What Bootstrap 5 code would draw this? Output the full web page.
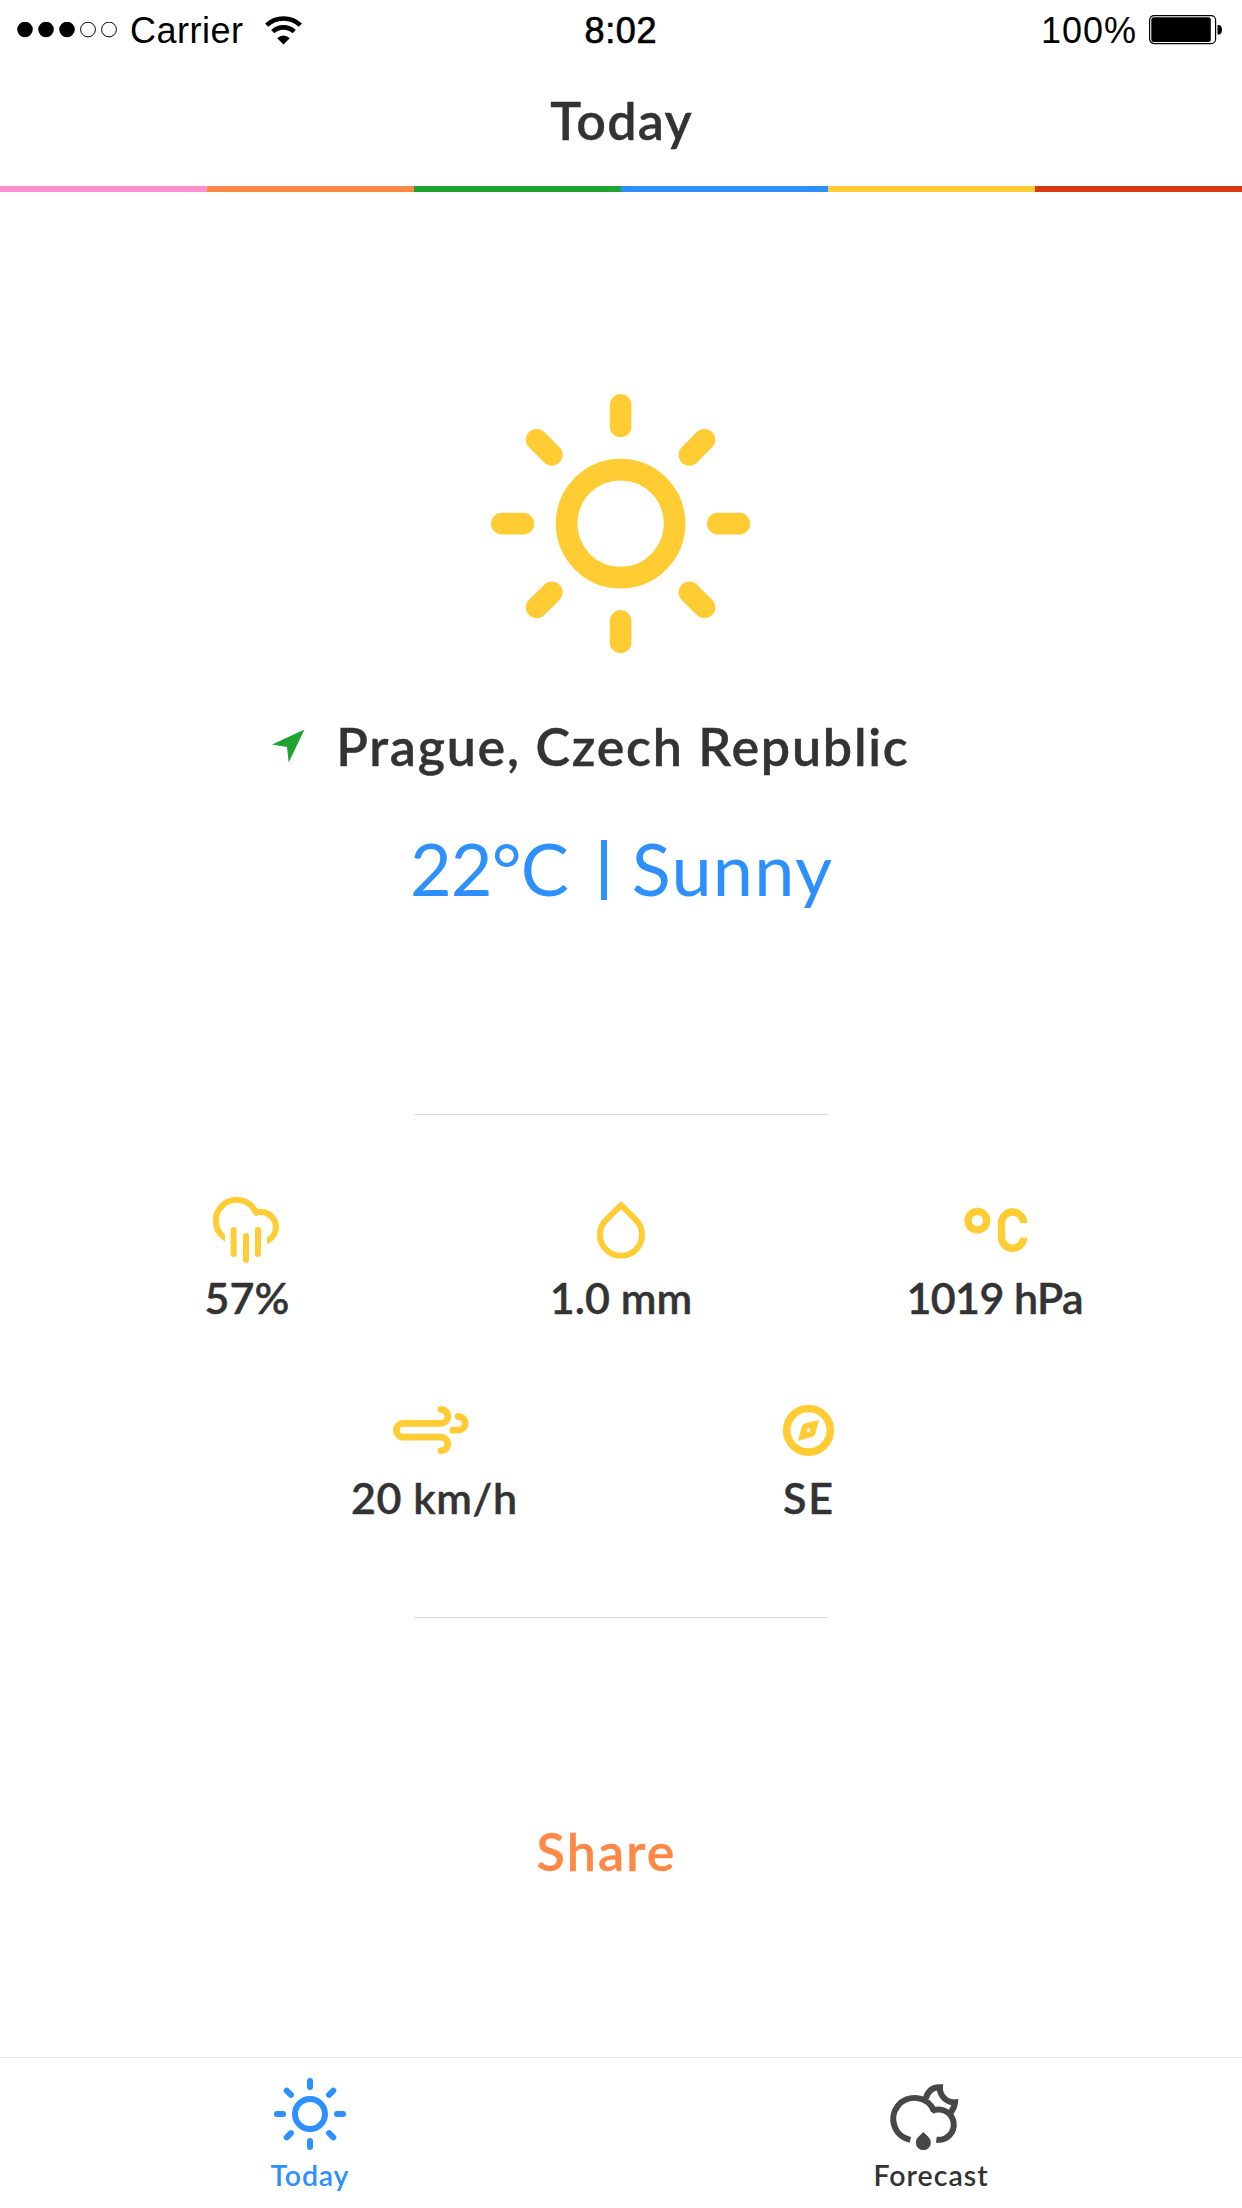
<!DOCTYPE html>
<html lang="en">
<head>
<meta charset="utf-8">
<meta name="viewport" content="width=device-width, initial-scale=1">
<title>Weather – Today</title>
<link rel="stylesheet" href="https://cdn.jsdelivr.net/npm/bootstrap@5.3.0/dist/css/bootstrap.min.css">
<style>
  :root { --sun: #ffcc33; --sky: #2e90ff; --ink: #333; --rule: #dcdcdc; }
  body { font-family: Lato, "Open Sans", sans-serif; color: var(--ink); background: #fff; }
  .screen { width: 1242px; height: 2208px; overflow: hidden; }
  svg { display: block; flex: none; }
  .sp { letter-spacing: var(--ls); margin-right: calc(var(--ls) * -1); white-space: nowrap; }

  .status-bar { height: 62px; font: 36px/36px "Liberation Sans", Arial, sans-serif; color: #000; padding: 0 19px 0 17px; }
  .status-side { flex: 1 1 0; }
  .carrier-name { --ls: .5px; margin-left: 11px; }
  .wifi { margin-left: 22px; }
  .clock { --ls: .7px; -webkit-text-stroke: .7px #000; padding-left: 1px; }
  .charge { --ls: 1px; margin-right: 12px; }

  .title-bar { height: 124px; padding-bottom: 9px; }
  .heading { font-size: 52px; line-height: 60px; font-weight: 600; margin-bottom: 0; --ls: 1.3px; -webkit-text-stroke: .4px currentColor; }
  .stripe { height: 6px; }
  .stripe > div { flex: 1; }

  .hero { height: 922px; padding-top: 201.500px; }
  .place { margin-top: 63px; padding-right: 62px; gap: 31px; }
  .place-name { --ls: 1.75px; }
  .temp { margin-top: 50px; font-size: 72px; line-height: 84px; color: var(--sky); }
  .temp .degrees { --ls: -.9px; }
  .temp .sky-state { --ls: 1.3px; }
  .temp .bar { width: 6px; height: 60px; background: var(--sky); margin: 4px 25px 0 32px; }

  .rule { width: 414px; height: 1px; background: var(--rule); }
  .metrics { height: 502px; padding-top: 65px; }
  .metric { width: 374px; height: 200px; font-size: 43px; line-height: 51px; font-weight: 600; -webkit-text-stroke: .4px currentColor; }
  .share-area { height: 439px; padding: 203px 31px 0 0; }
  .share-link { color: #ff8847; --ls: 2.200px; font-size: 52px; line-height: 60px; font-weight: 600; text-decoration: none; -webkit-text-stroke: .4px currentColor; }

  .tab-bar { height: 151px; border-top: 1px solid #e4e4e4; padding-top: 20px; }
  .tab { width: 50%; padding-right: 2px; font-size: 28.500px; line-height: 35px; font-weight: 600; color: var(--ink); text-decoration: none; }
  .tab svg { margin-bottom: 8px; }
  .tab.active { color: var(--sky); }
</style>
<script src="https://cdn.jsdelivr.net/npm/bootstrap@5.3.0/dist/js/bootstrap.bundle.min.js"></script>
</head>
<body>
<svg width="0" height="0" class="position-absolute" aria-hidden="true">
  <symbol id="sun" viewBox="-36 -36 72 72">
    <g fill="none" stroke="currentColor" stroke-width="6" stroke-linecap="round">
      <circle r="15"/>
      <path d="M0-27V-33M0 27V33M-27 0H-33M27 0H33M19.1-19.1 23.3-23.3M19.1 19.1 23.3 23.3M-19.1-19.1-23.3-23.3M-19.1 19.1-23.3 23.3"/>
    </g>
  </symbol>
</svg>

<div class="screen d-flex flex-column">
  <header>
    <div class="status-bar d-flex align-items-center">
      <div class="status-side d-flex align-items-center">
        <svg width="102" height="18" viewBox="0 0 102 18">
          <circle cx="8" cy="7.500" r="7.800"/><circle cx="29" cy="7.500" r="7.800"/><circle cx="50" cy="7.500" r="7.800"/>
          <g fill="none" stroke="#000"><circle cx="71" cy="7.500" r="7.400"/><circle cx="92" cy="7.500" r="7.400"/></g>
        </svg>
        <span class="carrier-name sp">Carrier</span>
        <svg class="wifi" width="37" height="30" viewBox="0 0 37 30">
          <g fill="none" stroke="#000" stroke-width="4.6"><path d="M1.6 9.2A24.6 24.6 0 0 1 35.4 9.2"/><path d="M7.8 15.7A15.4 15.4 0 0 1 29.2 15.7"/></g>
          <path d="M18.500 28.500L12.200 22.200A8.900 8.900 0 0 1 24.800 22.200Z"/>
        </svg>
      </div>
      <span class="clock sp">8:02</span>
      <div class="status-side d-flex align-items-center justify-content-end">
        <span class="charge sp">100%</span>
        <svg width="74" height="32" viewBox="0 0 74 32">
          <rect x=".6" y=".6" width="66" height="28" rx="4.500" fill="none" stroke="#000" stroke-width="1.200"/>
          <rect x="2.300" y="2.300" width="59.500" height="24.600" rx="2.500"/>
          <path d="M68.500 10V19.500H70Q73 19 73 14.800Q73 10.500 70 10Z"/>
        </svg>
      </div>
    </div>
    <div class="title-bar d-flex align-items-center justify-content-center"><h1 class="heading sp">Today</h1></div>
    <div class="stripe d-flex">
      <div style="background:#ff8fd0"></div><div style="background:#ff8847"></div><div style="background:#21a32f"></div>
      <div style="background:#2e90ff"></div><div style="background:#ffcc33"></div><div style="background:#d93612"></div>
    </div>
  </header>

  <main class="d-flex flex-column align-items-center">
    <section class="hero d-flex flex-column align-items-center">
      <svg width="259.200" height="259.200" color="#ffcc33"><use href="#sun"/></svg>
      <div class="place d-flex align-items-center">
        <svg width="33" height="34" viewBox="0 0 33 34"><path fill="#21a32f" d="M32.500 0.500L0 15.500L15 18L16.700 33.500Z"/></svg>
        <h2 class="heading place-name sp">Prague, Czech Republic</h2>
      </div>
      <div class="temp d-flex align-items-center">
        <span class="degrees sp">22°C</span><span class="bar"></span><span class="sky-state sp">Sunny</span>
      </div>
    </section>

    <div class="rule"></div>
    <section class="metrics">
      <div class="d-flex justify-content-center">
        <div class="metric d-flex flex-column align-items-center">
          <svg width="80" height="92" viewBox="51 0 240 276">
            <clipPath id="cloud-cut"><path d="M0 0H300V300H231V150H105V300H0z"/></clipPath>
            <g fill="none" stroke="#ffcc33" stroke-width="18">
              <g clip-path="url(#cloud-cut)"><path d="M114 179A62.500 62.500 0 1 1 198 98.500"/><path d="M192 101.200A45 45 0 1 1 222 185.200"/></g>
              <path stroke-linecap="round" d="M131 150V222M168 168V240M204 150V222"/>
            </g>
          </svg>
          <span class="sp">57%</span>
        </div>
        <div class="metric d-flex flex-column align-items-center">
          <svg width="80" height="92" viewBox="123 240 240 276">
            <path fill="none" stroke="#ffcc33" stroke-width="18" stroke-linejoin="round" d="M243 315L198.500 359.500A63 63 0 1 0 287.500 359.500Z"/>
          </svg>
          <span class="sp" style="--ls:.1px">1.0 mm</span>
        </div>
        <div class="metric d-flex flex-column align-items-center">
          <svg width="80" height="92" viewBox="195 0 240 276">
            <g fill="none" stroke="#ffcc33" stroke-width="22"><circle cx="262" cy="122" r="28"/><path d="M401 129V127.500A33.300 33.300 0 0 0 334.500 127.500V173.500A33.300 33.300 0 0 0 401 173.500V173"/></g>
          </svg>
          <span class="sp" style="--ls:-.6px">1019 hPa</span>
        </div>
      </div>
      <div class="d-flex justify-content-center">
        <div class="metric d-flex flex-column align-items-center">
          <svg width="80" height="92" viewBox="162 0 240 276" overflow="visible">
            <path fill="none" stroke="#ffcc33" stroke-width="20.500" stroke-linecap="round" d="M303 88.500A20.750 20.750 0 0 1 303 130H190A20.800 20.800 0 0 0 190 171.600H303A20.300 20.300 0 0 1 303 212.200M355 109.500A20.500 20.500 0 0 1 355 150.500H338.500"/>
          </svg>
          <span class="sp" style="--ls:.6px">20 km/h</span>
        </div>
        <div class="metric d-flex flex-column align-items-center">
          <svg width="80" height="92" viewBox="24 0 240 276">
            <circle cx="145.500" cy="151" r="65.500" fill="none" stroke="#ffcc33" stroke-width="23"/>
            <path fill="#ffcc33" d="M177 120L137 130Q128 132 125 141L114 182L155 171Q163 169 166 161Z"/><circle cx="145.500" cy="151" r="5.500" fill="#fff"/>
          </svg>
          <span class="sp" style="--ls:2px">SE</span>
        </div>
      </div>
    </section>
    <div class="rule"></div>

    <section class="share-area"><a href="#" class="share-link sp d-block">Share</a></section>
  </main>

  <nav class="tab-bar d-flex">
    <a href="#" class="tab active d-flex flex-column align-items-center">
      <svg width="72" height="72"><use href="#sun"/></svg>
      <span class="sp" style="--ls:.8px">Today</span>
    </a>
    <a href="#" class="tab d-flex flex-column align-items-center">
      <svg class="overflow-visible" width="72" height="72" viewBox="105 114 216 216">
        <g fill="none" stroke="#474747" stroke-width="18">
          <path d="M151 299.500A63.500 63.500 0 1 1 222 213"/><path d="M215 213.500A45.500 45.500 0 1 1 229 299"/>
          <path d="M197 175C204 152 220 141 240 141.500C238 167 260 189 285 187C284 199 280 208 272 218"/>
        </g>
        <path fill="#474747" d="M190 276L174 292A22.500 22.500 0 1 0 206 292Z"/>
      </svg>
      <span class="sp" style="--ls:1px">Forecast</span>
    </a>
  </nav>
</div>
</body>
</html>
